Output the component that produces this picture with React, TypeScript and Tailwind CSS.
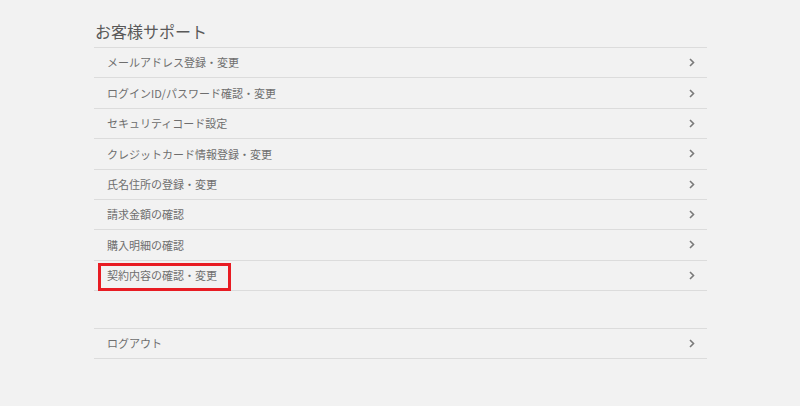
import React from "react";

const items = [
  "メールアドレス登録・変更",
  "ログインID/パスワード確認・変更",
  "セキュリティコード設定",
  "クレジットカード情報登録・変更",
  "氏名住所の登録・変更",
  "請求金額の確認",
  "購入明細の確認",
  "契約内容の確認・変更",
];

function Chevron() {
  return (
    <svg width="6" height="9" viewBox="0 0 6 9" className="mr-[12px]">
      <polyline points="1,1 4.5,4.5 1,8" fill="none" stroke="#7a7a7a" strokeWidth="1.6" />
    </svg>
  );
}

function Row({ label, highlight }: { label: string; highlight?: boolean }) {
  return (
    <div className="relative h-[30.375px] border-b border-[#dcdcdc] flex items-center justify-between pl-[13px]">
      <span className="text-[11px] text-[#6e6e6e]">{label}</span>
      <Chevron />
      {highlight && (
        <div className="absolute left-[4px] top-[2px] w-[133px] h-[28px] border-[3px] border-[#e81c23]" />
      )}
    </div>
  );
}

export default function App() {
  return (
    <div
      className="w-[800px] h-[406px] bg-[#f2f2f2] overflow-hidden"
      style={{ fontFamily: '"Noto Sans CJK JP", "Noto Sans", sans-serif' }}
    >
      <div className="ml-[94px] w-[613px]">
        <div className="h-[48px] flex items-center pt-[14px] border-b border-[#dcdcdc]">
          <span className="text-[16px] text-[#595959] pl-[1px]">お客様サポート</span>
        </div>
        <div>
          {items.map((l, i) => (
            <Row key={l} label={l} highlight={i === 7} />
          ))}
        </div>
        <div className="h-[38px] border-b border-[#dcdcdc]" />
        <Row label="ログアウト" />
      </div>
    </div>
  );
}
